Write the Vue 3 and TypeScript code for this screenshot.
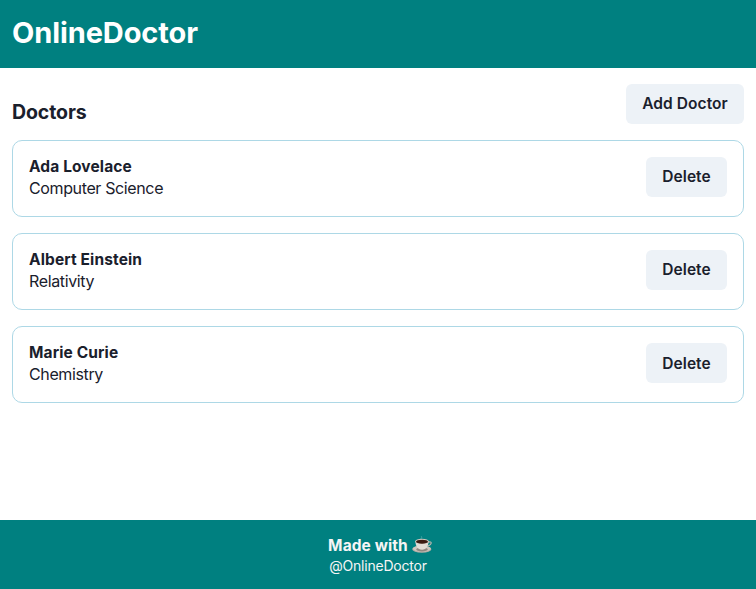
<script setup lang="ts">
import { ref } from 'vue'

interface Doctor {
  id: number
  name: string
  specialty: string
}

const doctors = ref<Doctor[]>([
  { id: 1, name: 'Ada Lovelace', specialty: 'Computer Science' },
  { id: 2, name: 'Albert Einstein', specialty: 'Relativity' },
  { id: 3, name: 'Marie Curie', specialty: 'Chemistry' },
])

function removeDoctor(id: number): void {
  doctors.value = doctors.value.filter((doctor) => doctor.id !== id)
}
</script>

<template>
  <div class="page">
    <header class="header">
      <h1 class="brand">OnlineDoctor</h1>
    </header>

    <main class="content">
      <div class="toolbar">
        <h2 class="title">Doctors</h2>
        <button class="button" type="button">Add Doctor</button>
      </div>
      <ul class="list">
        <li v-for="doctor in doctors" :key="doctor.id" class="card">
          <div class="details">
            <p class="name">{{ doctor.name }}</p>
            <p class="specialty">{{ doctor.specialty }}</p>
          </div>
          <button class="button delete" type="button" @click="removeDoctor(doctor.id)">Delete</button>
        </li>
      </ul>
    </main>

    <footer class="footer">
      <p class="made">
        <span class="made-text">Made with</span>
        <svg class="cup" viewBox="0 0 20 18" aria-hidden="true">
          <ellipse cx="9.8" cy="13.3" rx="9.6" ry="3.5" fill="#b5aca4" />
          <ellipse cx="9.8" cy="12.6" rx="9.1" ry="2.9" fill="#cfc8c0" />
          <ellipse cx="10" cy="13.4" rx="5.8" ry="2" fill="#91877f" />
          <path d="M16.2 6.2 C20.2 4.9 20.6 8.2 15.2 10.2" fill="none" stroke="#bdb5ad" stroke-width="1.1" />
          <path d="M3.4 5.2 C3.6 10 5.4 13.7 10 13.7 C14.6 13.7 16.4 10 16.6 5.2 Z" fill="#e2ddd6" />
          <ellipse cx="10" cy="5.4" rx="6.8" ry="2.6" fill="#d0c7bf" />
          <ellipse cx="10" cy="5.7" rx="6" ry="2" fill="#3b1b12" />
          <path d="M9.5 3.5 C7.8 2.4 11 1.8 9.3 .3" fill="none" stroke="#d8eeee" stroke-opacity=".4" stroke-width=".8" />
        </svg>
      </p>
      <p class="handle">@OnlineDoctor</p>
    </footer>
  </div>
</template>

<style>
body {
  margin: 0;
  background: #fff;
}
</style>

<style scoped>
.page {
  display: flex;
  flex-direction: column;
  height: 589px;
  color: #1a202c;
  font-family: Inter, "Liberation Sans", sans-serif;
  font-size: 16px;
}

h1,
h2,
p,
ul {
  margin: 0;
  padding: 0;
}

.header {
  box-sizing: border-box;
  height: 68px;
  padding: 10px 12px;
  background: #008080;
  color: #fff;
}

.brand {
  font-size: 29px;
  font-weight: 700;
  line-height: 45px;
  letter-spacing: -0.1px;
}

.content {
  flex: 1;
  padding: 16px 12px;
}

.toolbar {
  display: flex;
  justify-content: space-between;
  align-items: flex-end;
  height: 40px;
  margin-bottom: 16px;
}

.title {
  font-size: 19.5px;
  font-weight: 700;
  line-height: 24px;
  letter-spacing: -0.1px;
}

.button {
  box-sizing: border-box;
  height: 40px;
  width: 118px;
  padding: 0.5px 0 0;
  border: 0;
  border-radius: 6px;
  background: #edf2f7;
  color: #1a202c;
  font: 600 15.5px/38px Inter, "Liberation Sans", sans-serif;
  letter-spacing: 0.07px;
  white-space: nowrap;
}

.delete {
  width: 81px;
}

.list {
  display: flex;
  flex-direction: column;
  gap: 16.2px;
  list-style: none;
}

.card {
  box-sizing: border-box;
  display: flex;
  justify-content: space-between;
  align-items: flex-start;
  height: 77px;
  padding: 16px;
  border: 1px solid #add8e6;
  border-radius: 10px;
}

.name {
  line-height: 20px;
  font-size: 15.5px;
  font-weight: 700;
  letter-spacing: 0.12px;
}

.specialty {
  line-height: 23px;
  letter-spacing: -0.37px;
}

.footer {
  box-sizing: border-box;
  display: flex;
  flex-direction: column;
  align-items: center;
  height: 69px;
  padding-top: 14px;
  background: #008080;
  color: #f5f5f5;
}

.made {
  display: flex;
  align-items: center;
  gap: 4px;
  height: 21px;
  padding-left: 4px;
  font-size: 15.5px;
  font-weight: 700;
  letter-spacing: 0.1px;
}

.made-text {
  padding-top: 2px;
}

.cup {
  width: 20px;
  height: 18px;
}

.handle {
  font-size: 14px;
  line-height: 21px;
  letter-spacing: -0.2px;
}
</style>
